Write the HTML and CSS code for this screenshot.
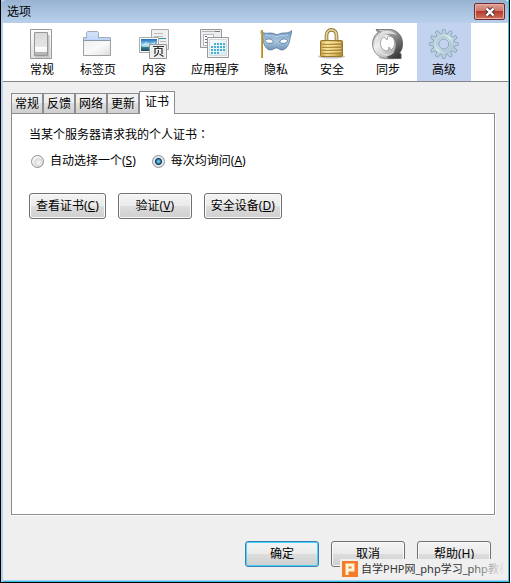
FILE: index.html
```html
<!DOCTYPE html>
<html lang="zh-CN">
<head>
<meta charset="utf-8">
<title>选项</title>
<link rel="stylesheet" href="styles.css">
</head>
<body>
<main class="window">
  <header class="titlebar">
    <h1 class="title">选项</h1>
    <button class="close" type="button" aria-label="关闭">
      <svg width="12" height="10" viewBox="0 0 12 10"><path d="M2.500 1.500 9.500 8.500M9.500 1.500 2.500 8.500" stroke="#54383c" stroke-width="4.400"/><path d="M2.500 1.500 9.500 8.500M9.500 1.500 2.500 8.500" stroke="#fff" stroke-width="2.400"/></svg>
    </button>
  </header>
  <nav class="toolbar">
    <button class="tool" type="button">
      <svg width="32" height="32" viewBox="0 0 32 32">
        <defs>
          <linearGradient id="plate" x2="0" y2="1"><stop offset="0" stop-color="#fcfcfc"/><stop offset="1" stop-color="#dedede"/></linearGradient>
          <linearGradient id="rocker" x2="0" y2="1"><stop offset="0" stop-color="#d8d8d8"/><stop offset=".64" stop-color="#e6e6e6"/><stop offset=".65" stop-color="#fff"/><stop offset=".83" stop-color="#f4f4f4"/><stop offset=".84" stop-color="#b5b5b5"/></linearGradient>
        </defs>
        <path d="M4.500 1.500h21v29h-21z" fill="url(#plate)" stroke="#999"/>
        <path d="M9 28.500h13.500V7" fill="none" stroke="#c2c2c2" stroke-width="2"/>
        <path d="M8.500 4.500h13v23h-13z" fill="url(#rocker)" stroke="#979797"/>
      </svg>
      <span>常规</span>
    </button>
    <button class="tool" type="button">
      <svg width="32" height="32" viewBox="0 0 32 32">
        <defs><linearGradient id="folder" x2="1" y2="1"><stop offset="0" stop-color="#eee"/><stop offset=".5" stop-color="#fafafa"/><stop offset="1" stop-color="#ddd"/></linearGradient></defs>
        <path d="M4.500 9.500v-5l1-1h10l1 1v5" fill="#cfe0fb" stroke="#a5acb8"/>
        <path d="M1.500 13V9.500h27V13" fill="#bdd4f8" stroke="#a5acb8"/>
        <path d="M5 8h11v3H5z" fill="#c7dbfa"/>
        <path d="M1.500 12.500h27v15h-27z" fill="url(#folder)" stroke="#a0a0a0"/>
        <path d="M2 12.500h26" stroke="#8a97ac"/>
      </svg>
      <span>标签页</span>
    </button>
    <button class="tool" type="button">
      <svg width="32" height="32" viewBox="0 0 32 32">
        <defs><linearGradient id="sky" x2="0" y2="1"><stop offset="0" stop-color="#1d6bb8"/><stop offset=".5" stop-color="#9bd8f2"/><stop offset=".62" stop-color="#3e8d99"/><stop offset="1" stop-color="#16495c"/></linearGradient></defs>
        <path d="M13.500 1.500h17v20h-17z" fill="#f0f0f0" stroke="#aaa"/>
        <path d="M16 5.500h9M16 8.500h9M22 13.500h6" stroke="#bbb"/><path d="M20 10.500h8" stroke="#2b8fa5"/>
        <path d="M1.500 9.500h19v15h-19z" fill="#fff" stroke="#aaa"/>
        <path d="M3 11h16v12H3z" fill="url(#sky)"/><path d="m4 17 4-3 4 2 5-2v5H4z" fill="#d3f1fa" opacity=".65"/>
        <path d="M11.500 16.500h17v14h-17z" fill="#eee" stroke="#999"/>
        <g fill="none" stroke="#333" stroke-width="1.200"><path d="M15 18.500h11M20.500 18.500l-1 2M17 26v-5.500h7V26M20.500 22c0 4-1 5-4.500 6.500M21.500 26l4 2.500"/></g>
      </svg>
      <span>内容</span>
    </button>
    <button class="tool" type="button">
      <svg width="32" height="32" viewBox="0 0 32 32">
        <defs><linearGradient id="pane" x2="1" y2="1"><stop offset="0" stop-color="#fff"/><stop offset="1" stop-color="#d5e8f1"/></linearGradient></defs>
        <path d="M1.500 1.500h21v18h-21z" fill="#eee" stroke="#999"/>
        <path d="M3 3.500h18" stroke="#b0b0b0"/><path d="M16 3.500h5" stroke="#778"/>
        <path d="M4.500 6.500h10v11h-10z" fill="#fff" stroke="#aeb8c2"/>
        <path d="M6 8.500h2M6 11.500h2M6 14.500h2" stroke="#667"/>
        <path d="M8.500 9.500h21v20h-21z" fill="#f5f7f8" stroke="#999"/>
        <path d="M10.500 11.500h17v16h-17z" fill="url(#pane)" stroke="#d5d9dd"/>
        <path d="M15 16h11M12 19h14M12 22h14M12 25h8" stroke="#43b0d4" stroke-width="2" stroke-dasharray="2 1"/>
      </svg>
      <span>应用程序</span>
    </button>
    <button class="tool" type="button">
      <svg width="32" height="32" viewBox="0 0 32 32">
        <defs><linearGradient id="mask" x2="0" y2="1"><stop offset="0" stop-color="#6f97bd"/><stop offset=".55" stop-color="#a9c6e0"/><stop offset="1" stop-color="#6f93b5"/></linearGradient></defs>
        <path d="M.8 3.500C4 6 8 5 11 5c3 0 4 1.500 6 1.500S20 5 23 5s6 0 9-2.500c-.5 3-1.500 5-2 8-.5 6-4 11.500-8 11.500-3 0-3-2-5.500-2s-3 2-6 2c-4 0-7-5-7.500-10.500C2.500 8 1 6 .8 3.500Z" fill="url(#mask)" stroke="#587a9b" stroke-width=".8"/>
        <path d="M5 7c4 1 7 0 11 2 4-2 8-1 12-2" fill="none" stroke="#b9d0e6"/>
        <path d="M5 12.500c2-2.500 7-2 8.500 1.500-2.500 2-7 2-8.500-1.500ZM19.500 14c1.500-3.500 6-4 8-1.500-1 3.500-5.500 3.500-8 1.500Z" fill="#fff" stroke="#4e7091" stroke-width=".8"/>
        <path d="M2 2v28" stroke="#a87c1a" stroke-width="2"/><path d="M1.800 2v28" stroke="#ebc85a" stroke-width=".8"/>
      </svg>
      <span>隐私</span>
    </button>
    <button class="tool" type="button">
      <svg width="32" height="32" viewBox="0 0 32 32">
        <defs>
          <linearGradient id="brass"><stop offset="0" stop-color="#c39a45"/><stop offset=".3" stop-color="#f0da8a"/><stop offset=".6" stop-color="#dcbf64"/><stop offset="1" stop-color="#b08632"/></linearGradient>
        </defs>
        <ellipse cx="15.500" cy="28.500" rx="13.500" ry="2" fill="#c4c4c4"/>
        <path d="M10.500 14V7.500C10.500 0 20.500 0 20.500 7.500V14" fill="none" stroke="#8f7431" stroke-width="3.600"/>
        <path d="M10.500 14V7.500C10.500 0 20.500 0 20.500 7.500V14" fill="none" stroke="#e2d4a0" stroke-width="1.800"/>
        <rect x="4.500" y="12.500" width="22" height="16" rx="1" fill="url(#brass)" stroke="#98762c"/>
        <path d="M6 16.500h19M6 19.500h19M6 22.500h19M6 25.500h19" stroke="#b28b3a"/><path d="M6 14.500h19M6 17.500h19M6 20.500h19M6 23.500h19" stroke="#f7eab4" opacity=".6"/>
      </svg>
      <span>安全</span>
    </button>
    <button class="tool" type="button">
      <svg width="32" height="32" viewBox="0 0 32 32">
        <defs>
          <linearGradient id="steel" x2="1" y2="1"><stop offset="0" stop-color="#777"/><stop offset=".35" stop-color="#f2f2f2"/><stop offset=".7" stop-color="#bbb"/><stop offset="1" stop-color="#777"/></linearGradient>
          <linearGradient id="dark" x1="0" y1="0" x2=".7" y2="1"><stop offset="0" stop-color="#ddd"/><stop offset=".4" stop-color="#999"/><stop offset="1" stop-color="#3c3c3c"/></linearGradient>
        </defs>
        <ellipse cx="18" cy="30" rx="12" ry="1.500" fill="#ccc"/>
        <path d="M4 1.500h13C25 1.500 30.500 8 30.500 15.500c0 4-1 7-3 9.500l1.500 1v4.500H15C7 30.500.5 24 .5 16 .5 11 2.500 7 6 4.500Z" fill="url(#steel)" stroke="#777" stroke-width=".8"/>
        <path d="M4 1.500h13C25 1.500 30.500 8 30.500 15.500c0 4-1 7-3 9.500l1.500 1v4.500H17l-2-2c4-1 7-3 8-7 2-5 1-10-3-13-5-4-10-3-14 1C7 7 8 5 9 4Z" fill="url(#dark)" stroke="#666" stroke-width=".6"/>
        <path d="M8 5c6-4 13-2 17 2-6-2-12-2-17 2C4 12 4 17 5 21 1 16 2 9 8 5Z" fill="#f0f0f0" opacity=".75"/>
        <path d="M6 20c4 7 11 8 17 3-3 6-13 8-17-3Z" fill="#fff" opacity=".45"/>
        <path d="m12 9 3 3 1-4c5 0 7 4 6.500 8-.5 3-1.500 5-3.500 6l-2-3-1 4c-5 0-8-4-7.500-8 .2-3 1.500-5 3.500-6Z" fill="#fff" stroke="#777" stroke-width=".6"/>
      </svg>
      <span>同步</span>
    </button>
    <button class="tool selected" type="button">
      <svg width="32" height="32" viewBox="0 0 32 32">
        <defs>
          <linearGradient id="gear" x2="1" y2="1"><stop offset="0" stop-color="#b2cbd8"/><stop offset=".5" stop-color="#d9e7ee"/><stop offset="1" stop-color="#98b9cb"/></linearGradient>
          <path id="tooth" d="m13.600 6 .9-4.500h2.600l.9 4.500"/>
          <g id="teeth">
            <use href="#tooth"/><use href="#tooth" transform="rotate(30 15.800 16)"/><use href="#tooth" transform="rotate(60 15.800 16)"/><use href="#tooth" transform="rotate(90 15.800 16)"/><use href="#tooth" transform="rotate(120 15.800 16)"/><use href="#tooth" transform="rotate(150 15.800 16)"/><use href="#tooth" transform="rotate(180 15.800 16)"/><use href="#tooth" transform="rotate(210 15.800 16)"/><use href="#tooth" transform="rotate(240 15.800 16)"/><use href="#tooth" transform="rotate(270 15.800 16)"/><use href="#tooth" transform="rotate(300 15.800 16)"/><use href="#tooth" transform="rotate(330 15.800 16)"/>
          </g>
        </defs>
        <circle cx="15.800" cy="16" r="10.500" fill="url(#gear)" stroke="#8aa9bd"/>
        <use href="#teeth" fill="#b9d0dc" stroke="#8aa9bd" stroke-width=".9"/>
        <circle cx="15.800" cy="16" r="10" fill="url(#gear)"/>
        <circle cx="15.800" cy="16" r="7" fill="none" stroke="#a9c3d2"/>
        <circle cx="15.800" cy="16" r="5" fill="#c3d2ef" stroke="#86a5b9"/>
      </svg>
      <span>高级</span>
    </button>
  </nav>

  <section class="content">
    <div class="tabs" role="tablist">
      <button class="tab" type="button" role="tab">常规</button>
      <button class="tab" type="button" role="tab">反馈</button>
      <button class="tab" type="button" role="tab">网络</button>
      <button class="tab" type="button" role="tab">更新</button>
      <button class="tab active" type="button" role="tab" aria-selected="true">证书</button>
    </div>
    <div class="panel" role="tabpanel">
      <fieldset class="choice">
        <legend>当某个服务器请求我的个人证书<span class="colon" lang="zh-TW">：</span></legend>
        <div class="radios">
          <label class="option"><input type="radio" name="cert"><span>自动选择一个(<u>S</u>)</span></label>
          <label class="option"><input type="radio" name="cert" checked><span>每次均询问(<u>A</u>)</span></label>
        </div>
      </fieldset>
      <div class="actions">
        <button class="button" type="button">查看证书(<u>C</u>)</button>
        <button class="button" type="button">验证(<u>V</u>)</button>
        <button class="button" type="button">安全设备(<u>D</u>)</button>
      </div>
    </div>
  </section>

  <footer class="footer">
    <button class="button default" type="button">确定</button>
    <button class="button" type="button">取消</button>
    <button class="button" type="button">帮助(H)</button>
  </footer>
  <div class="watermark">
    <svg width="16" height="16" viewBox="0 0 16 16"><path d="M0 0h16v16H0z" fill="#f47b2a"/><path d="M5 14V4h6v5H5" fill="none" stroke="#fff5d8" stroke-width="3"/></svg>
    <span>自学PHP网_php学习_php教程</span>
  </div>
</main>
</body>
</html>
```

FILE: styles.css
```css
* {
  box-sizing: border-box;
}

body {
  margin: 0;
  background: #fff;
  color: #000;
  font: 12px/18px "Noto Sans", "Noto Sans CJK SC", sans-serif;
}

button {
  margin: 0;
  color: inherit;
  font: inherit;
}

svg {
  display: block;
  fill: none;
}

u {
  text-underline-offset: 1px;
}

.window {
  position: relative;
  display: flex;
  flex-direction: column;
  min-height: 100vh;
  margin-right: 1px;
  padding: 0 1px 2px 2px;
  border: solid #000;
  border-width: 0 1px 1px;
  background: #efefef;
  box-shadow: inset 2px 0 #b4d0ef, inset -1px -1px #36c5e8, inset 0 -2px #a9cdec;
}

.titlebar {
  display: flex;
  justify-content: space-between;
  align-items: flex-start;
  height: 23px;
  margin: 0 -1px 0 -2px;
  padding: 3px 3px 0 6px;
  border-right: 1px solid #36c5e8;
  border-radius: 5px 5px 0 0;
  background: linear-gradient(#98b3d2, #b8d0eb);
}

.title {
  margin: 0;
  font-size: 12px;
  font-weight: 400;
  line-height: 18px;
}

.close {
  display: grid;
  place-items: center;
  width: 31px;
  height: 17px;
  padding: 0;
  border: 1px solid #6e2b34;
  border-radius: 2px;
  background: linear-gradient(#dfa295, #cd796b 45%, #b43b2b 50%, #d0745c);
  box-shadow: inset 0 0 0 1px #e8afa4;
}

.toolbar {
  display: flex;
  gap: 2px;
  padding: 0 12px;
  border-bottom: 1px solid #858585;
  background: #fff;
}

.tool {
  display: flex;
  flex-direction: column;
  align-items: center;
  gap: 1px;
  min-width: 54px;
  height: 58px;
  padding: 5px 8px 0;
  border: 0;
  background: transparent;
}

.selected {
  background: #c3d2ef;
}

.content {
  display: flex;
  flex: 1;
  flex-direction: column;
  padding: 9px 13px 0 8px;
}

.tabs {
  display: flex;
  align-items: flex-end;
}

.tab {
  height: 20px;
  padding: 0 3px;
  border: 1px solid #8b8b93;
  border-bottom: 0;
  background: linear-gradient(#f2f2f2, #ececec 48%, #dedede 50%, #d0d0d0);
}

.active {
  position: relative;
  height: 23px;
  margin-bottom: -1px;
  padding: 0 5px 3px;
  background: #fff;
}

.panel {
  flex: 1;
  padding: 12px 17px;
  border: 1px solid #8b8b93;
  background: #fff;
  box-shadow: 1px 1px #fff;
}

.choice {
  margin: 0;
  padding: 0;
  border: 0;
}

.choice legend {
  padding: 0;
}

.colon {
  font-family: "Noto Sans CJK TC", sans-serif;
  line-height: 1;
}

.radios {
  display: flex;
  gap: 14px;
  margin-top: 8px;
}

.option {
  display: flex;
  align-items: center;
  gap: 6px;
}

.option input {
  width: 13px;
  height: 13px;
  margin: 0 0 0 2px;
  border: 1px solid #8e8f8f;
  border-radius: 50%;
  appearance: none;
  background: radial-gradient(circle at 60% 60%, #f8f8f8, #d8dbdd 4px, #f4f4f4 5px);
}

.option input:checked {
  background: radial-gradient(circle, #8edcf5 0, #2f86b5 2px, #10334f 3px, #e3e8ec 4px);
}

.actions {
  display: flex;
  gap: 12px;
  margin-top: 23px;
}

.button {
  min-width: 74px;
  height: 26px;
  padding: 0 6px;
  border: 1px solid #707070;
  border-radius: 3px;
  background: linear-gradient(#f3f3f3, #ebebeb 48%, #dddddd 50%, #cfcfcf);
  box-shadow: inset 0 0 0 1px #fafafa;
}

.actions .button {
  padding-bottom: 1px;
}

.default {
  border-color: #3c7fb1;
  box-shadow: inset 0 0 0 1px #45d3f8;
}

.footer {
  display: flex;
  justify-content: flex-end;
  gap: 12px;
  padding: 26px 17px 13px;
}

.watermark {
  position: absolute;
  right: 4px;
  bottom: 4px;
  display: flex;
  align-items: center;
  gap: 3px;
  width: 165px;
  height: 19px;
  padding-left: 2px;
  overflow: hidden;
  background: #efefef;
  color: #333;
  font-size: 11px;
  white-space: nowrap;
}

.watermark svg {
  flex: none;
}

.watermark::after {
  position: absolute;
  inset: 0 0 0 auto;
  width: 40px;
  background: linear-gradient(90deg, transparent, #efefef);
  content: "";
}
```
